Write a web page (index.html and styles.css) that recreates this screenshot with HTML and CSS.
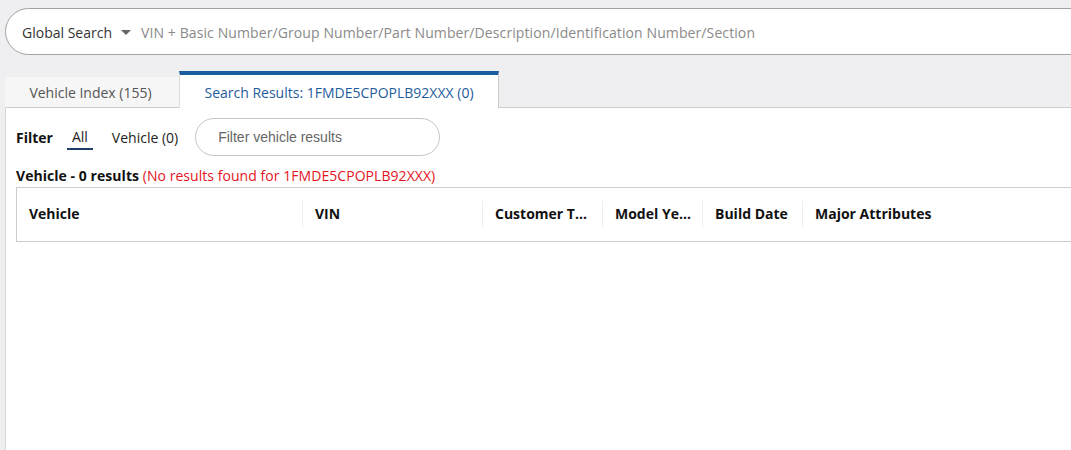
FILE: index.html
```html
<!DOCTYPE html>
<html lang="en">
<head>
    <meta charset="UTF-8">
    <title>Vehicle Search</title>
    <link rel="stylesheet" href="styles.css">
</head>
<body>
    <div class="search-bar">
        <span class="scope">Global Search</span>
        <span class="caret"></span>
        <span class="search-hint">VIN + Basic Number/Group Number/Part Number/Description/Identification Number/Section</span>
    </div>

    <div class="tabs">
        <div class="tab">Vehicle Index (155)</div>
        <div class="tab active">Search Results: 1FMDE5CPOPLB92XXX (0)</div>
    </div>

    <div class="panel">
        <div class="filter-row">
            <span class="filter-label">Filter</span>
            <span class="filter-opt selected">All</span>
            <span class="filter-opt">Vehicle (0)</span>
            <div class="filter-input">Filter vehicle results</div>
        </div>

        <div class="result-title">
            <b>Vehicle - 0 results</b>
            <span class="no-results">(No results found for 1FMDE5CPOPLB92XXX)</span>
        </div>

        <div class="grid">
            <div class="col col-vehicle">Vehicle</div>
            <div class="col col-vin">VIN</div>
            <div class="col col-small">Customer T...</div>
            <div class="col col-tiny">Model Ye...</div>
            <div class="col col-tiny">Build Date</div>
            <div class="col col-rest">Major Attributes</div>
        </div>
    </div>
</body>
</html>
```

FILE: styles.css
```css
html, body {
    height: 100%;
}

body {
    margin: 0;
    padding: 8px 0 0 5px;
    box-sizing: border-box;
    overflow: hidden;
    background-color: #efeef0;
    font-family: "Open Sans", Arial, sans-serif;
    font-size: 14px;
    color: #333;
    display: flex;
    flex-direction: column;
}

/* barra de busca global */
.search-bar {
    height: 47px;
    box-sizing: border-box;
    margin-right: -30px;
    border: 1px solid #a3a3a3;
    border-radius: 24px 0 0 24px;
    background-color: #fff;
    display: flex;
    align-items: center;
    padding: 2px 0 0 16px;
    flex-shrink: 0;
}

.scope {
    color: #333;
}

.caret {
    width: 0;
    height: 0;
    border-left: 5px solid transparent;
    border-right: 5px solid transparent;
    border-top: 5px solid #666;
    margin: 0 10px 0 9px;
}

.search-hint {
    color: #8a8a8a;
    white-space: nowrap;
    letter-spacing: 0.1px;
}

/* abas */
.tabs {
    display: flex;
    align-items: flex-end;
    margin-top: 16px;
    height: 36px;
    flex-shrink: 0;
}

.tab {
    height: 30px;
    width: 174px;
    box-sizing: border-box;
    background-color: #f6f6f6;
    color: #555;
    display: flex;
    align-items: center;
    justify-content: center;
    padding-right: 3px;
}

.tab.active {
    height: 37px;
    width: 320px;
    background-color: #fff;
    color: #1f5c9c;
    border-top: 4px solid #1a5d9f;
    border-left: 1px solid #ddd;
    border-right: 1px solid #ccc;
    padding: 2px 0 0;
    position: relative;
    z-index: 1;
    margin-bottom: -1px;
}

/* painel de resultados */
.panel {
    flex: 1;
    background-color: #fff;
    border-top: 1px solid #ccc;
    border-left: 1px solid #d6d6d6;
    padding: 10px 0 0 10px;
}

.filter-row {
    display: flex;
    align-items: center;
    height: 38px;
}

.filter-label {
    font-weight: bold;
    color: #111;
    margin-right: 19px;
}

.filter-opt {
    color: #222;
    margin-right: 17px;
}

.filter-opt.selected {
    padding: 0 5px 2px;
    margin-left: -5px;
    margin-right: 19px;
    border-bottom: 2px solid #1c3f66;
    margin-top: 2px;
}

.filter-input {
    width: 245px;
    height: 38px;
    box-sizing: border-box;
    border: 1px solid #c6c6c6;
    border-radius: 19px;
    display: flex;
    align-items: center;
    padding-left: 22px;
    font-family: "Liberation Sans", Arial, sans-serif;
    color: #666;
}

.result-title {
    margin-top: 10px;
    color: #111;
    letter-spacing: 0.05px;
}

.no-results {
    color: #e4141e;
}

/* cabeçalho da tabela */
.grid {
    display: flex;
    height: 55px;
    margin-top: 2px;
    margin-right: -20px;
    box-sizing: border-box;
    border: 1px solid #ccc;
    font-weight: bold;
    color: #111;
    align-items: center;
    padding-bottom: 2px;
}

.col {
    box-sizing: border-box;
    padding-left: 12px;
    height: 26px;
    display: flex;
    align-items: center;
    border-left: 1px solid #ececec;
    white-space: nowrap;
}

.col-vehicle {
    width: 285px;
    border-left: none;
}

.col-vin {
    width: 180px;
}

.col-small {
    width: 120px;
}

.col-tiny {
    width: 100px;
}

.col-rest {
    flex: 1;
}
```
